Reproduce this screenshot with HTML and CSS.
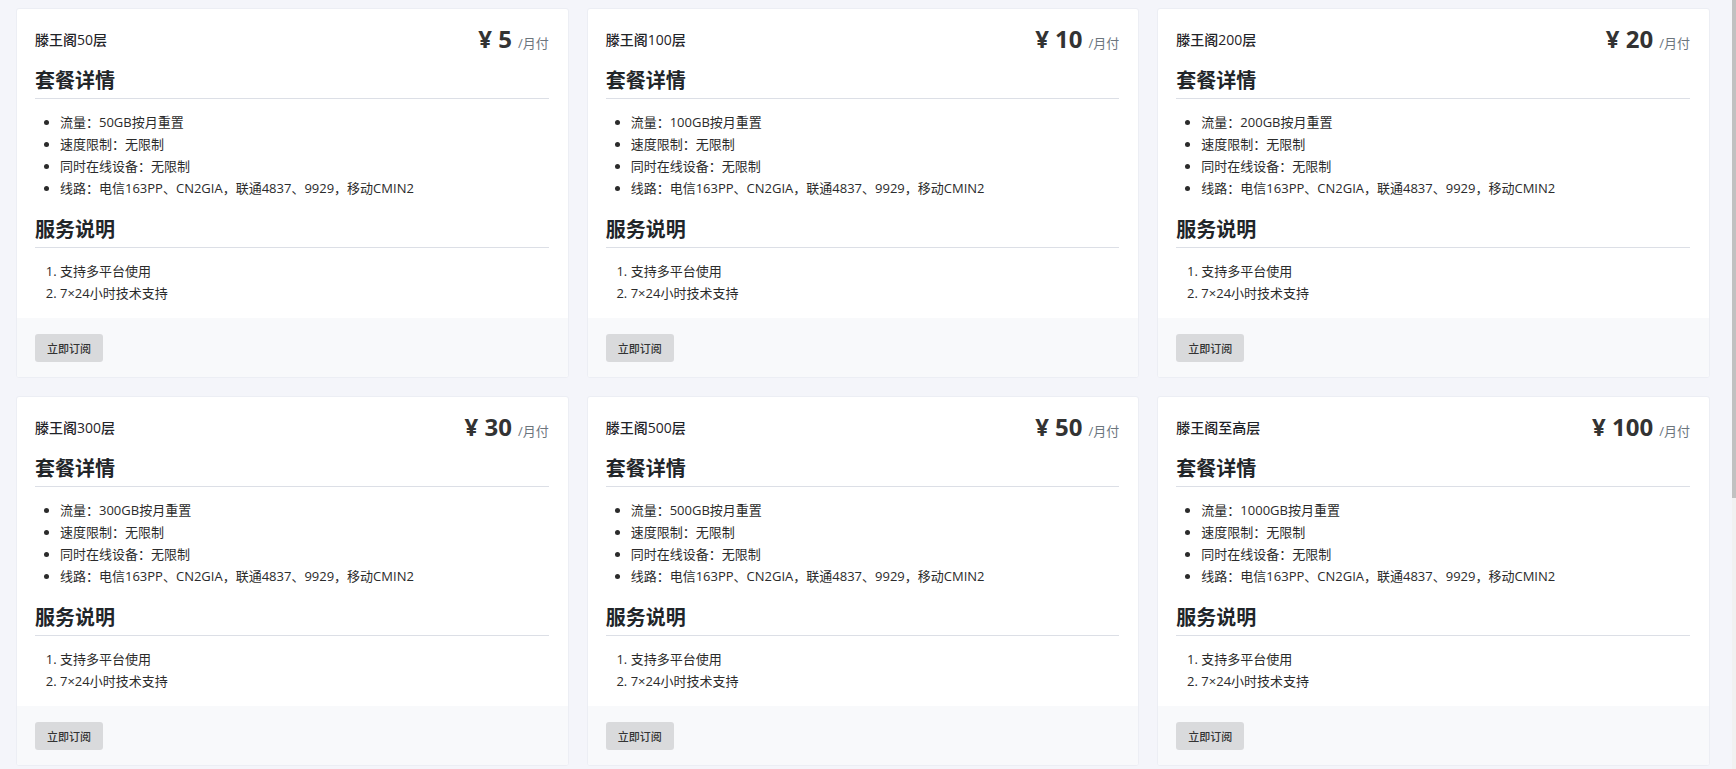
FILE: index.html
```html
<!DOCTYPE html>
<html lang="zh-CN">
<head>
    <meta charset="UTF-8">
    <meta name="viewport" content="width=device-width, initial-scale=1.0">
    <title>套餐订阅</title>
    <link rel="stylesheet" href="styles.css">
</head>
<body>
    <div class="plans" id="plans"></div>

    <div class="scroll-track"><div class="scroll-thumb"></div></div>

    <script>
        const plans = [
            { name: '滕王阁50层', price: 5, traffic: '50GB' },
            { name: '滕王阁100层', price: 10, traffic: '100GB' },
            { name: '滕王阁200层', price: 20, traffic: '200GB' },
            { name: '滕王阁300层', price: 30, traffic: '300GB' },
            { name: '滕王阁500层', price: 50, traffic: '500GB' },
            { name: '滕王阁至高层', price: 100, traffic: '1000GB' }
        ];

        const plansDiv = document.getElementById('plans');

        plans.forEach(plan => {
            const card = document.createElement('div');
            card.className = 'plan-card';
            card.innerHTML = `
                <div class="plan-body">
                    <div class="plan-head">
                        <span class="plan-name">${plan.name}</span>
                        <span class="plan-price"><span class="amount">¥ ${plan.price}</span><span class="period">/月付</span></span>
                    </div>
                    <h3 class="section-title">套餐详情</h3>
                    <ul class="plan-list">
                        <li>流量：${plan.traffic}按月重置</li>
                        <li>速度限制：无限制</li>
                        <li>同时在线设备：无限制</li>
                        <li>线路：电信163PP、CN2GIA，联通4837、9929，移动CMIN2</li>
                    </ul>
                    <h3 class="section-title">服务说明</h3>
                    <ol class="plan-list">
                        <li>支持多平台使用</li>
                        <li>7×24小时技术支持</li>
                    </ol>
                </div>
                <div class="plan-foot">
                    <button class="btn-subscribe">立即订阅</button>
                </div>`;
            plansDiv.appendChild(card);
        });
    </script>
</body>
</html>
```

FILE: styles.css
```css
body {
    font-family: 'Open Sans', 'Noto Sans CJK SC', sans-serif;
    background-color: #f4f5fa;
    color: #333;
    margin: 0;
    padding: 8px 26px 420px 16px;
}
.plans {
    display: grid;
    grid-template-columns: repeat(3, 1fr);
    gap: 18px;
}
.plan-card {
    background-color: #ffffff;
    border: 1px solid #eceef4;
    border-radius: 3px;
    overflow: hidden;
}
.plan-body {
    padding: 15px 19px 14px 18px;
}
.plan-head {
    display: flex;
    justify-content: space-between;
    align-items: center;
    height: 30px;
}
.plan-name {
    font-size: 14px;
    font-weight: 500;
    color: #1f2328;
}
.plan-price {
    display: flex;
    align-items: baseline;
}
.amount {
    font-size: 24px;
    font-weight: 700;
    color: #333;
    line-height: 30px;
}
.period {
    font-size: 13px;
    color: #6c757d;
    margin-left: 6px;
}
.section-title {
    font-size: 20px;
    font-weight: 700;
    line-height: 28px;
    color: #212529;
    margin: 13px 0 0;
    padding-bottom: 3px;
    border-bottom: 1px solid #dcdfe6;
}
.plan-list + .section-title {
    margin-top: 17px;
}
.plan-list {
    margin: 12px 0 0;
    padding-left: 25px;
    font-size: 13px;
    line-height: 22px;
    color: #2b2b2b;
}
.plan-foot {
    background-color: #f8f9fb;
    padding: 16px 18px 15px;
}
.btn-subscribe {
    font-family: 'Open Sans', 'Noto Sans CJK SC', sans-serif;
    font-size: 11px;
    font-weight: 500;
    color: #333;
    background-color: #d9dadc;
    border: none;
    border-radius: 3px;
    height: 28px;
    padding: 0 12px;
    cursor: pointer;
}
.btn-subscribe:hover {
    background-color: #cfd0d3;
}
.scroll-track {
    position: fixed;
    top: 0;
    right: 0;
    width: 4px;
    height: 100%;
    background-color: #f1f1f1;
}
.scroll-thumb {
    height: 498px;
    background-color: #c1c1c1;
}
```
